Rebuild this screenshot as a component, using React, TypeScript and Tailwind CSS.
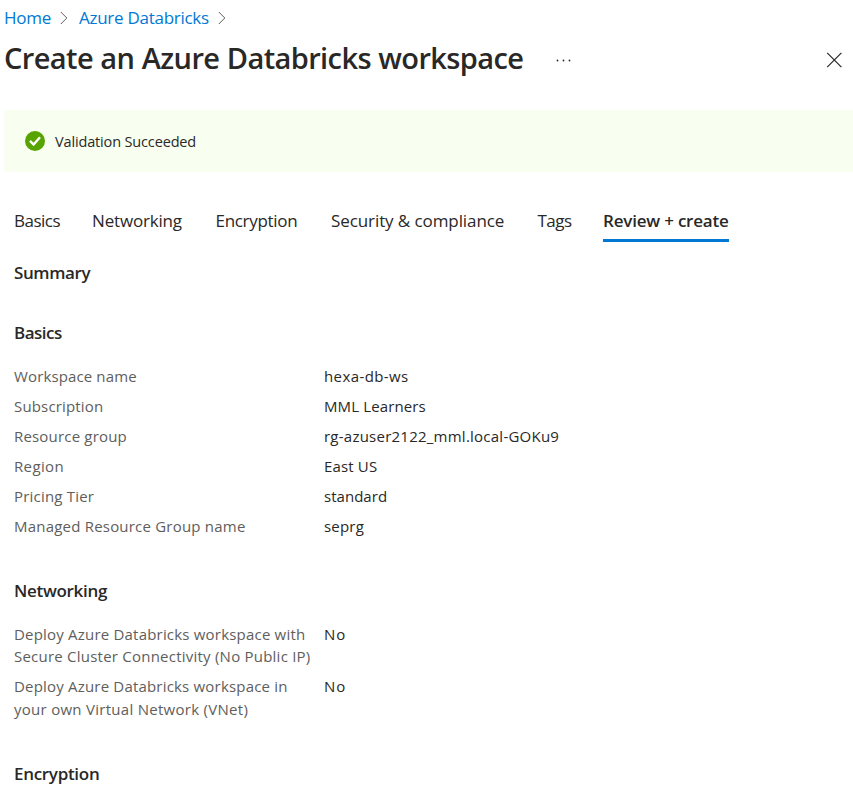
import React from "react";

type Item = { text: string; cls: string };
type Entry = { label: Item[]; value: Item };

const basics: Entry[] = [
  { label: [{ text: "Workspace name", cls: "tracking-[0.13px]" }], value: { text: "hexa-db-ws", cls: "tracking-[0.4px]" } },
  { label: [{ text: "Subscription", cls: "tracking-[0.16px]" }], value: { text: "MML Learners", cls: "tracking-[0.12px]" } },
  { label: [{ text: "Resource group", cls: "tracking-[0.18px]" }], value: { text: "rg-azuser2122_mml.local-GOKu9", cls: "tracking-[0.24px]" } },
  { label: [{ text: "Region", cls: "tracking-[0.35px]" }], value: { text: "East US", cls: "tracking-[0.15px]" } },
  { label: [{ text: "Pricing Tier", cls: "tracking-[0.2px]" }], value: { text: "standard", cls: "tracking-[0.03px]" } },
  { label: [{ text: "Managed Resource Group name", cls: "tracking-[0.21px]" }], value: { text: "seprg", cls: "tracking-[0.2px]" } },
];

const networking: Entry[] = [
  {
    label: [
      { text: "Deploy Azure Databricks workspace with", cls: "tracking-[0.2px]" },
      { text: "Secure Cluster Connectivity (No Public IP)", cls: "tracking-[0.23px]" },
    ],
    value: { text: "No", cls: "tracking-[0.9px]" },
  },
  {
    label: [
      { text: "Deploy Azure Databricks workspace in", cls: "tracking-[0.19px]" },
      { text: "your own Virtual Network (VNet)", cls: "tracking-[0.28px]" },
    ],
    value: { text: "No", cls: "tracking-[0.9px]" },
  },
];

const tabs = [
  { text: "Basics", cls: "w-[78px] tracking-[-0.5px]" },
  { text: "Networking", cls: "w-[123.5px] tracking-[-0.17px]" },
  { text: "Encryption", cls: "w-[115.5px] tracking-[-0.3px]" },
  { text: "Security & compliance", cls: "w-[206.5px] tracking-[-0.09px]" },
  { text: "Tags", cls: "w-[65.5px] tracking-[-0.5px]" },
];

function Chevron({ className }: { className: string }) {
  return (
    <svg className={className} width="8" height="14" viewBox="0 0 8 14" fill="none" stroke="#605e5c" strokeWidth="1">
      <path d="M0.8 1 L6.8 7 L0.8 13" />
    </svg>
  );
}

function Entries({ rows }: { rows: Entry[] }) {
  return (
    <dl className="flex flex-col gap-[7.5px] text-[15px] leading-[22.5px] whitespace-nowrap">
      {rows.map((row, i) => (
        <div key={i} className="flex">
          <dt className="w-[310px] text-[#605e5c]">
            {row.label.map((line) => (
              <span key={line.text} className={`block ${line.cls}`}>{line.text}</span>
            ))}
          </dt>
          <dd className={row.value.cls}>{row.value.text}</dd>
        </div>
      ))}
    </dl>
  );
}

export default function App() {
  return (
    <div className="h-[793px] w-[853px] overflow-hidden bg-white font-['Open_Sans','Noto_Sans',sans-serif] text-[#292827]">
      <nav className="flex h-9 items-center pl-1 text-[17px] whitespace-nowrap text-[#0078d4]">
        <a className="w-14 tracking-[-0.25px]">Home</a>
        <Chevron className="mr-[11px]" />
        <a className="w-[139px] tracking-[-0.27px]">Azure Databricks</a>
        <Chevron className="" />
      </nav>
      <header className="flex h-[44px] items-center pl-1">
        <h1 className="w-[551px] text-[29px] leading-[40px] font-semibold tracking-[-0.6px] [word-spacing:0.4px] whitespace-nowrap">
          Create an Azure Databricks workspace
        </h1>
        <svg width="16" height="4" viewBox="0 0 16 4" fill="#292827" className="mt-[5px]">
          <circle cx="2.5" cy="1.5" r="0.9" />
          <circle cx="8.5" cy="1.5" r="0.9" />
          <circle cx="14.5" cy="1.5" r="0.9" />
        </svg>
        <svg width="16" height="16" viewBox="0 0 16 16" stroke="#292827" strokeWidth="1.2" className="mt-1 mr-[11px] ml-auto">
          <path d="M1.2 0.9 L15.4 15.1 M15.4 0.9 L1.2 15.1" />
        </svg>
      </header>
      <div className="mt-[30px] ml-1 flex h-[62px] items-center rounded-l-[3px] bg-[#f8fff0] pl-[21px]">
        <svg width="20" height="20" viewBox="0 0 20 20">
          <circle cx="10" cy="10" r="10" fill="#57a300" />
          <path d="M5 9.9 L8.6 13.5 L15 6.2" fill="none" stroke="#fff" strokeWidth="2.4" />
        </svg>
        <span className="mt-0.5 ml-[10px] text-[14.5px] tracking-[-0.15px]">Validation Succeeded</span>
      </div>
      <div className="mt-[29px] flex h-[41px] pl-[14px] text-[17px] leading-[40px] whitespace-nowrap">
        {tabs.map((tab) => (
          <span key={tab.text} className={tab.cls}>{tab.text}</span>
        ))}
        <span className="h-[41px] w-[126px] border-b-3 border-[#0078d4] font-semibold tracking-[-0.2px]">
          Review + create
        </span>
      </div>
      <main className="pl-[14px]">
        <h2 className="mt-[19px] text-[17px] leading-6 font-semibold tracking-[-0.4px]">Summary</h2>
        <h3 className="mt-9 mb-5 text-[17px] leading-6 font-semibold tracking-[-0.5px]">Basics</h3>
        <Entries rows={basics} />
        <h3 className="mt-[41px] mb-[20.3px] text-[17px] leading-6 font-semibold tracking-[-0.3px]">Networking</h3>
        <Entries rows={networking} />
        <h3 className="mt-[41.5px] text-[17px] leading-6 font-semibold tracking-[-0.3px]">Encryption</h3>
      </main>
    </div>
  );
}
